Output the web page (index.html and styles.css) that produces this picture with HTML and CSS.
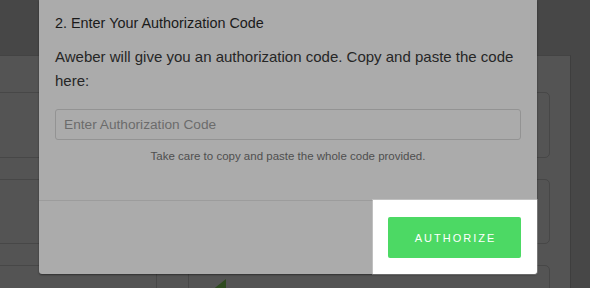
FILE: index.html
```html
<!DOCTYPE html>
<html>
<head>
<meta charset="utf-8">
<link rel="stylesheet" href="styles.css">
</head>
<body>
<div class="page">
  <div class="topbar"></div>
  <div class="panel">
    <div class="card c1"></div>
    <div class="card c2"></div>
    <div class="card c3">
      <div class="cell w1"></div>
      <div class="cell w2"></div>
      <div class="cell w3">
        <svg class="tri" width="15" height="12" viewBox="0 0 15 12"><polygon points="15,0 15,12 0,12" fill="#2e4a1f"/></svg>
      </div>
    </div>
  </div>
</div>

<div class="modal">
  <div class="modal-body">
    <h3 class="title">2. Enter Your Authorization Code</h3>
    <p class="desc">Aweber will give you an authorization code. Copy and paste the code here:</p>
    <input class="code-input" type="text" placeholder="Enter Authorization Code">
    <p class="hint">Take care to copy and paste the whole code provided.</p>
  </div>
  <div class="modal-footer">
    <div class="highlight"></div>
    <button class="btn">AUTHORIZE</button>
  </div>
</div>
</body>
</html>
```

FILE: styles.css
```css
html, body {
  margin: 0;
  padding: 0;
}
body {
  width: 590px;
  height: 288px;
  overflow: hidden;
  background: #474747;
  font-family: "Liberation Sans", Arial, sans-serif;
  position: relative;
}
.page {
  display: flex;
  flex-direction: column;
  height: 288px;
  overflow: hidden;
}
.topbar {
  height: 55px;
  flex: none;
  background: #474747;
}
.panel {
  width: 571px;
  height: 233px;
  flex: none;
  overflow: hidden;
  box-sizing: border-box;
  background: #545454;
  border-top: 1px solid #434343;
  border-right: 1px solid #3e3e3e;
  padding: 36px 0 0 0;
  display: flex;
  flex-direction: column;
  gap: 21px;
}
.card {
  flex: none;
  margin-left: -6px;
  width: 556px;
  box-sizing: border-box;
  border: 1px solid #474747;
  border-radius: 5px;
  background: #545454;
}
.c1 { height: 66px; }
.c2 { height: 65px; }
.c3 {
  height: 40px;
  display: flex;
}
.cell {
  height: 100%;
  box-sizing: border-box;
}
.w1 { width: 162px; border-right: 1px solid #474747; }
.w2 { width: 32px; border-right: 1px solid #474747; }
.w3 { flex: 1; padding: 13px 0 0 22px; }
.tri { display: block; }

.modal {
  position: absolute;
  left: 39px;
  top: 0;
  width: 498px;
  background: #ababab;
  border-radius: 0 0 3px 3px;
  box-shadow: 0 1px 2px rgba(0, 0, 0, 0.45);
}
.modal-body {
  padding: 13px 16px 36px 16px;
  display: flex;
  flex-direction: column;
}
.title {
  margin: 0;
  font-size: 14.4px;
  line-height: 20px;
  font-weight: normal;
  color: #1a1a1a;
}
.desc {
  margin: 12px 0 0 0;
  font-size: 15px;
  line-height: 24px;
  color: #262626;
}
.code-input {
  margin: 16px 0 0 0;
  height: 31px;
  box-sizing: border-box;
  border: 1px solid #939393;
  border-radius: 3px;
  background: #ababab;
  padding: 0 8px;
  font-family: "Liberation Sans", Arial, sans-serif;
  font-size: 13.7px;
  color: #333;
  outline: none;
}
.code-input::placeholder {
  color: #6b6b6b;
}
.hint {
  margin: 8px 0 0 0;
  font-size: 11.5px;
  line-height: 16px;
  text-align: center;
  color: #4f4f4f;
}
.modal-footer {
  position: relative;
  border-top: 1px solid #9c9c9c;
  padding: 16px;
  display: flex;
  justify-content: flex-end;
}
.highlight {
  position: absolute;
  right: 0;
  top: -1px;
  width: 164px;
  bottom: 0;
  background: #ffffff;
  border-radius: 0 0 3px 0;
  box-shadow: 0 0 0 1px rgba(255, 255, 255, 0.25);
  z-index: 0;
}
.btn {
  position: relative;
  z-index: 1;
  width: 133px;
  height: 41px;
  border: none;
  border-radius: 2px;
  background: #4cd964;
  color: #ffffff;
  font-family: "Liberation Sans", Arial, sans-serif;
  font-size: 11px;
  letter-spacing: 2px;
  padding: 0 0 0 2px;
}
```
